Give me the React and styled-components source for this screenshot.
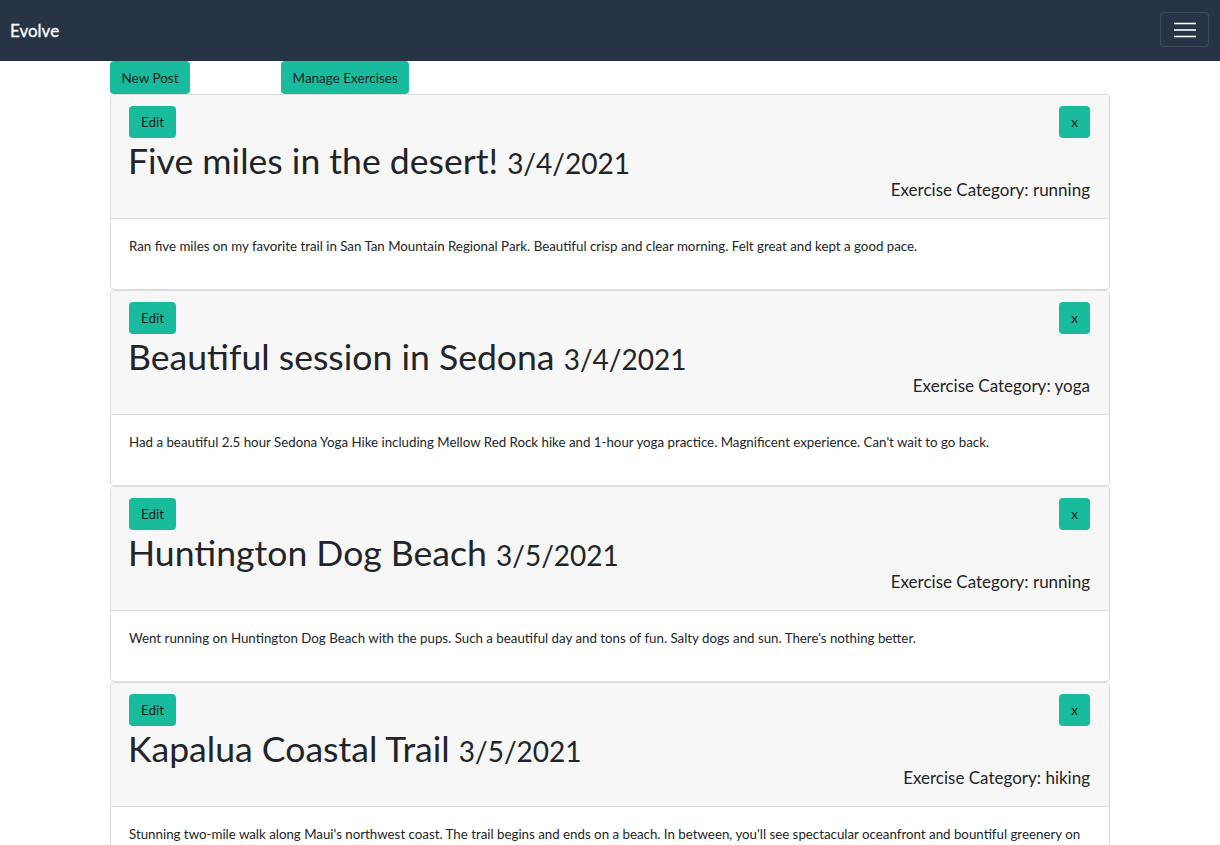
import React from "react";
import styled, { createGlobalStyle } from "styled-components";

const Global = createGlobalStyle`
  * { box-sizing: border-box; }
  body { margin: 0; font-family: Lato, "Noto Sans", sans-serif; color: #212529; background: #fff; }
`;

const Navbar = styled.nav`
  height: 61px;
  background: #263446;
  display: flex;
  align-items: center;
  justify-content: space-between;
  padding: 0 11px 0 10px;
`;

const Brand = styled.a`
  color: #fff;
  font-size: 17px;
  font-weight: 400;
  text-decoration: none;
  -webkit-text-stroke: 0.3px #fff;
`;

const Toggler = styled.button`
  width: 49px;
  height: 35px;
  margin-top: -2px;
  background: transparent;
  border: 1px solid rgba(255, 255, 255, 0.12);
  border-radius: 4px;
  display: flex;
  align-items: center;
  justify-content: center;
  padding: 0;
`;

const Container = styled.main`
  width: 1000px;
  margin-left: 110px;
`;

const TopActions = styled.div`
  display: flex;
  gap: 91px;
`;

const Button = styled.button`
  background: #18bc9c;
  border: none;
  border-radius: 4px;
  color: #1a1d21;
  font-family: Lato, sans-serif;
  font-size: 13.5px;
  padding: 0 ${(p) => p.$px || 12}px;
  height: ${(p) => p.$h || 32}px;
  cursor: pointer;
`;

const Card = styled.article`
  border: 1px solid #dcdcdc;
  border-radius: 4px;
  overflow: hidden;
`;

const CardHeader = styled.header`
  background: #f7f7f7;
  border-bottom: 1px solid #dcdcdc;
  padding: 11px 19px 0 18px;
  height: 124px;
`;

const HeaderRow = styled.div`
  display: flex;
  justify-content: space-between;
`;

const Title = styled.h1`
  margin: 1px 0 0 -1px;
  font-size: 35.6px;
  font-weight: 400;
  line-height: 44px;
`;

const DateText = styled.small`
  font-size: 28px;
`;

const Category = styled.h5`
  margin: -6px 0 0;
  text-align: right;
  font-size: 17px;
  font-weight: 400;
  line-height: 22px;
`;

const CardBody = styled.div`
  padding: 19px 18px 0;
  height: 70px;
  font-size: 13.3px;
  line-height: 17px;
`;

const posts = [
  {
    title: "Five miles in the desert!",
    date: "3/4/2021",
    category: "running",
    body: "Ran five miles on my favorite trail in San Tan Mountain Regional Park. Beautiful crisp and clear morning. Felt great and kept a good pace.",
  },
  {
    title: "Beautiful session in Sedona",
    date: "3/4/2021",
    category: "yoga",
    body: "Had a beautiful 2.5 hour Sedona Yoga Hike including Mellow Red Rock hike and 1-hour yoga practice. Magnificent experience. Can't wait to go back.",
  },
  {
    title: "Huntington Dog Beach",
    date: "3/5/2021",
    category: "running",
    body: "Went running on Huntington Dog Beach with the pups. Such a beautiful day and tons of fun. Salty dogs and sun. There's nothing better.",
  },
  {
    title: "Kapalua Coastal Trail",
    date: "3/5/2021",
    category: "hiking",
    body: "Stunning two-mile walk along Maui's northwest coast. The trail begins and ends on a beach. In between, you'll see spectacular oceanfront and bountiful greenery on",
  },
];

export default function App() {
  return (
    <>
      <Global />
      <Navbar>
        <Brand href="#">Evolve</Brand>
        <Toggler aria-label="menu">
          <svg width="22" height="16" viewBox="0 0 22 16">
            <g stroke="#fff" strokeWidth="1.6">
              <line x1="0" y1="1.5" x2="22" y2="1.5" />
              <line x1="0" y1="8" x2="22" y2="8" />
              <line x1="0" y1="14.5" x2="22" y2="14.5" />
            </g>
          </svg>
        </Toggler>
      </Navbar>
      <Container>
        <TopActions>
          <Button $h={33} $px={11.5}>New Post</Button>
          <Button $h={33} $px={11.5}>Manage Exercises</Button>
        </TopActions>
        {posts.map((p) => (
          <Card key={p.title}>
            <CardHeader>
              <HeaderRow>
                <Button>Edit</Button>
                <Button $px={12}>x</Button>
              </HeaderRow>
              <Title>
                {p.title} <DateText>{p.date}</DateText>
              </Title>
              <Category>Exercise Category: {p.category}</Category>
            </CardHeader>
            <CardBody>{p.body}</CardBody>
          </Card>
        ))}
      </Container>
    </>
  );
}
